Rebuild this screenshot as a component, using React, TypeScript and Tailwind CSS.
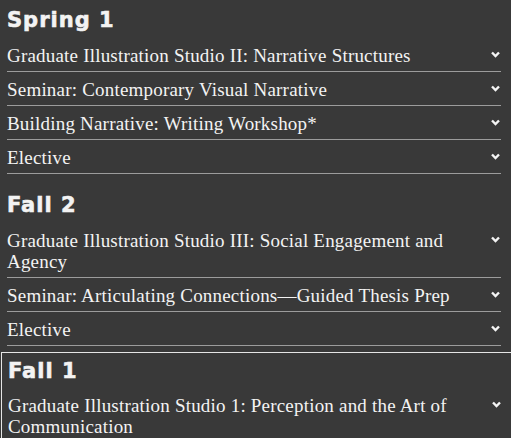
import React from 'react';

const sections = [
  {
    title: 'Spring 1',
    courses: [
      'Graduate Illustration Studio II: Narrative Structures',
      'Seminar: Contemporary Visual Narrative',
      'Building Narrative: Writing Workshop*',
      'Elective',
    ],
  },
  {
    title: 'Fall 2',
    courses: [
      'Graduate Illustration Studio III: Social Engagement and Agency',
      'Seminar: Articulating Connections\u2014Guided Thesis Prep',
      'Elective',
    ],
  },
];

const Chevron: React.FC = () => (
  <svg width="9" height="7" viewBox="0 0 9 7" className="shrink-0">
    <path d="M1 1.5 L4.5 5 L8 1.5" fill="none" stroke="#f4f4f4" strokeWidth="2.4" />
  </svg>
);

const CourseRow: React.FC<{ name: string; divider?: boolean }> = ({ name, divider = true }) => (
  <div className={`flex items-start justify-between pt-[7px] pb-[5px] ${divider ? 'border-b border-[#9c9c9c]' : ''}`}>
    <span className="pr-[20px] text-[19px] leading-[21px] tracking-[0.2px]">{name}</span>
    <span className="pt-[6px] pr-[1px]">
      <Chevron />
    </span>
  </div>
);

const App: React.FC = () => {
  return (
    <div className="h-[438px] w-[511px] overflow-hidden bg-[#393939] text-[#f3f3f3] font-['Liberation_Serif',serif]">
      <div className="pl-[7px] pr-[10px]">
        {sections.map((section, i) => (
          <div key={i} className={i === 0 ? 'pt-[9px]' : 'pt-[20px]'}>
            <h2 className="mb-[6px] font-['DejaVu_Sans',sans-serif] text-[21px] font-bold leading-[23px] tracking-[1px] [-webkit-text-stroke:0.6px_#f3f3f3]">
              {section.title}
            </h2>
            {section.courses.map((c, j) => (
              <CourseRow key={j} name={c} />
            ))}
          </div>
        ))}
      </div>

      {/* Fall 1 box */}
      <div className="mt-[6px] ml-[1px] w-[530px] border-l border-t border-[#e6e6e6] pt-[7px] pl-[6px]">
        <div className="w-[494px]">
          <h2 className="mb-[5px] font-['DejaVu_Sans',sans-serif] text-[21px] font-bold leading-[23px] tracking-[1px] [-webkit-text-stroke:0.6px_#f3f3f3]">
            Fall 1
          </h2>
          <CourseRow name="Graduate Illustration Studio 1: Perception and the Art of Communication" divider={false} />
        </div>
      </div>
    </div>
  );
};

export default App;
